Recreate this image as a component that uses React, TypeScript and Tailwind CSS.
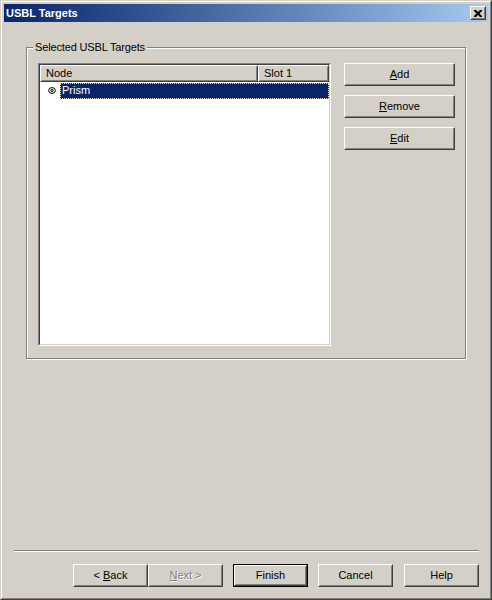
import type { ReactNode } from "react";

const FONT = "font-['Liberation_Sans',Arial,sans-serif]";

function Raised({ children, className = "" }: { children: ReactNode; className?: string }) {
  return (
    <div
      className={`border border-t-white border-l-white border-r-[#404040] border-b-[#404040] bg-[#d4d0c8] ${className}`}
    >
      <div className="flex h-full w-full items-center justify-center border border-t-[#d4d0c8] border-l-[#d4d0c8] border-r-[#808080] border-b-[#808080]">
        {children}
      </div>
    </div>
  );
}

function Btn({
  children,
  className = "",
  isDefault = false,
}: {
  children: ReactNode;
  className?: string;
  isDefault?: boolean;
}) {
  if (isDefault) {
    return (
      <div className={`border border-black ${className}`}>
        <Raised className="h-full w-full">{children}</Raised>
      </div>
    );
  }
  return <Raised className={className}>{children}</Raised>;
}

function TargetIcon() {
  return (
    <svg width="8" height="7" viewBox="0 0 8 7" className="block">
      <ellipse cx="4" cy="3.5" rx="3.4" ry="2.9" fill="none" stroke="#000" strokeWidth="1" />
      <ellipse cx="4" cy="3.5" rx="1.3" ry="1" fill="none" stroke="#000" strokeWidth="1" />
    </svg>
  );
}

export default function App() {
  return (
    <div className={`h-[600px] w-[492px] bg-[#d4d0c8] text-[11px] leading-none text-black ${FONT}`}>
      {/* window frame */}
      <div className="h-full w-full border border-t-[#d4d0c8] border-l-[#d4d0c8] border-r-[#404040] border-b-[#404040]">
        <div className="flex h-full w-full flex-col border border-t-white border-l-white border-r-[#808080] border-b-[#808080] p-[2px]">
          {/* Title bar */}
          <div className="flex h-[18px] shrink-0 items-center justify-between bg-gradient-to-r from-[#0a246a] to-[#a6caf0] pl-[2px] pr-[2px]">
            <span className="text-[11px] font-bold text-white">USBL Targets</span>
            <Raised className="h-[14px] w-[16px]">
              <svg width="8" height="7" viewBox="0 0 8 7" className="block">
                <path d="M0 0h2l2 2 2-2h2v1L5.5 3.5 8 6v1H6L4 5 2 7H0V6l2.5-2.5L0 1z" fill="#000" />
              </svg>
            </Raised>
          </div>

          {/* Body */}
          <div className="flex flex-1 flex-col">
            {/* Group box */}
            <div className="relative ml-[22px] mt-[25px] h-[312px] w-[440px] border border-[#808080] shadow-[inset_1px_1px_0_#fff,1px_1px_0_#fff]">
              <span className="absolute -top-[6px] left-[6px] bg-[#d4d0c8] px-[2px] tracking-[-0.15px]">
                Selected USBL Targets
              </span>
              <div className="flex pl-[11px] pt-[15px]">
                {/* List view */}
                <div className="h-[283px] w-[293px] border border-t-[#808080] border-l-[#808080] border-r-white border-b-white">
                  <div className="flex h-full w-full flex-col border border-t-[#404040] border-l-[#404040] border-r-[#d4d0c8] border-b-[#d4d0c8] bg-white">
                    <div className="flex h-[17px] shrink-0">
                      <Raised className="h-full w-[218px]">
                        <span className="w-full pl-[4px]">Node</span>
                      </Raised>
                      <Raised className="h-full w-[71px]">
                        <span className="w-full pl-[4px]">Slot 1</span>
                      </Raised>
                    </div>
                    <div className="flex h-[17px] items-center">
                      <div className="flex w-[20px] justify-center pl-[3px]">
                        <TargetIcon />
                      </div>
                      <div className="flex h-[16px] flex-1 items-center border border-dotted border-[#f0e6c0] bg-[#0a246a] pl-[1px] text-white">
                        Prism
                      </div>
                    </div>
                  </div>
                </div>

                {/* Side buttons */}
                <div className="ml-[13px] flex flex-col gap-[9px]">
                  <Btn className="h-[23px] w-[111px]">
                    <span>
                      <span className="underline underline-offset-1">A</span>dd
                    </span>
                  </Btn>
                  <Btn className="h-[23px] w-[111px]">
                    <span>
                      <span className="underline underline-offset-1">R</span>emove
                    </span>
                  </Btn>
                  <Btn className="h-[23px] w-[111px]">
                    <span>
                      <span className="underline underline-offset-1">E</span>dit
                    </span>
                  </Btn>
                </div>
              </div>
            </div>

            <div className="flex-1" />

            {/* Separator */}
            <div className="ml-[10px] mr-[9px] h-[2px] border-t border-b border-t-[#808080] border-b-white" />

            {/* Wizard buttons */}
            <div className="mt-[12px] flex justify-end pb-[9px] pr-[9px]">
              <Btn className="h-[23px] w-[75px]">
                <span>
                  &lt; <span className="underline underline-offset-1">B</span>ack
                </span>
              </Btn>
              <Btn className="h-[23px] w-[75px]">
                <span className="text-[#808080] [text-shadow:1px_1px_0_#fff]">
                  <span className="underline underline-offset-1">N</span>ext &gt;
                </span>
              </Btn>
              <Btn isDefault className="ml-[10px] h-[23px] w-[75px]">
                Finish
              </Btn>
              <Btn className="ml-[10px] h-[23px] w-[75px]">Cancel</Btn>
              <Btn className="ml-[11px] h-[23px] w-[75px]">Help</Btn>
            </div>
          </div>
        </div>
      </div>
    </div>
  );
}
